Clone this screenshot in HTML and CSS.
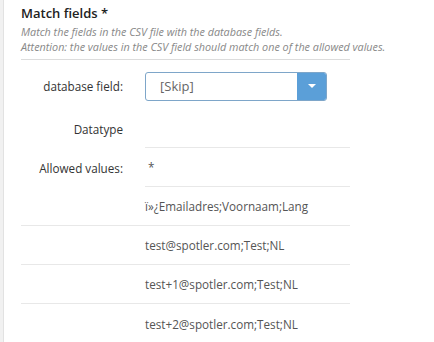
FILE: index.html
```html
<!DOCTYPE html>
<html lang="en">
  <head>
    <meta charset="UTF-8" />
    <title>Match fields</title>
    <link rel="stylesheet" href="styles.css">
  </head>
  <body>
    <div class="panel">
      <div class="section-head">
        <div class="section-title">Match fields *</div>
        <div class="section-desc">
          Match the fields in the CSV file with the database fields.<br />
          Attention: the values in the CSV field should match one of the allowed values.
        </div>
      </div>
      <div class="field-row select-row">
        <div class="field-label">database field:</div>
        <div class="field-value">
          <div class="select">
            <span class="select-text">[Skip]</span>
            <span class="select-btn"></span>
          </div>
        </div>
      </div>
      <div class="field-row">
        <div class="field-label">Datatype</div>
        <div class="field-value line"></div>
      </div>
      <div class="field-row">
        <div class="field-label">Allowed values:</div>
        <div class="field-value line star">*</div>
      </div>
      <div class="field-row line">
        <div class="field-label"></div>
        <div class="field-value">ï»¿Emailadres;Voornaam;Lang</div>
      </div>
      <div class="field-row line">
        <div class="field-label"></div>
        <div class="field-value">test@spotler.com;Test;NL</div>
      </div>
      <div class="field-row line">
        <div class="field-label"></div>
        <div class="field-value">test+1@spotler.com;Test;NL</div>
      </div>
      <div class="field-row">
        <div class="field-label"></div>
        <div class="field-value">test+2@spotler.com;Test;NL</div>
      </div>
    </div>
  </body>
</html>
```

FILE: styles.css
```css
* {
  box-sizing: border-box;
}
body {
  margin: 0;
  background-color: #fff;
  font-family: "Open Sans", sans-serif;
  color: #333;
}
.panel {
  min-height: 342px;
  border-left: 3px solid #f1f1f1;
  box-shadow: inset 1px 0 0 #e2e2e2;
  padding: 4px 0 0 18px;
  width: 350px;
  overflow: visible;
}
.section-head {
  width: 329px;
  border-bottom: 1px solid #dcdcdc;
  padding-bottom: 5px;
}
.section-title {
  font-size: 13px;
  font-weight: 600;
  line-height: 18px;
  color: #222;
}
.section-desc {
  font-size: 10.8px;
  font-style: italic;
  line-height: 15px;
  color: #888;
  white-space: nowrap;
  margin-top: 2px;
}
.field-row {
  display: flex;
  align-items: center;
  gap: 22px;
  width: 329px;
  height: 39px;
  font-size: 11.7px;
}
.field-row.line {
  border-bottom: 1px solid #e8e8e8;
}
.select-row {
  height: 49px;
  padding-top: 3px;
}
.field-label {
  width: 102px;
  flex-shrink: 0;
  text-align: right;
  color: #333;
}
.field-value {
  flex: 1;
  height: 100%;
  display: flex;
  align-items: center;
  color: #555;
}
.field-value.line {
  border-bottom: 1px solid #e8e8e8;
}
.field-value.star {
  padding-left: 3px;
}
.select {
  display: flex;
  width: 182px;
  height: 29px;
  border: 1px solid #7ea6c9;
  border-radius: 3px;
  overflow: hidden;
}
.select-text {
  flex: 1;
  display: flex;
  align-items: center;
  padding-left: 14px;
  font-size: 13px;
  color: #666;
}
.select-btn {
  width: 29px;
  background-color: #5b9fd8;
  display: flex;
  align-items: center;
  justify-content: center;
}
.select-btn::after {
  content: "";
  border-left: 4px solid transparent;
  border-right: 4px solid transparent;
  border-top: 4px solid #fff;
}
```
